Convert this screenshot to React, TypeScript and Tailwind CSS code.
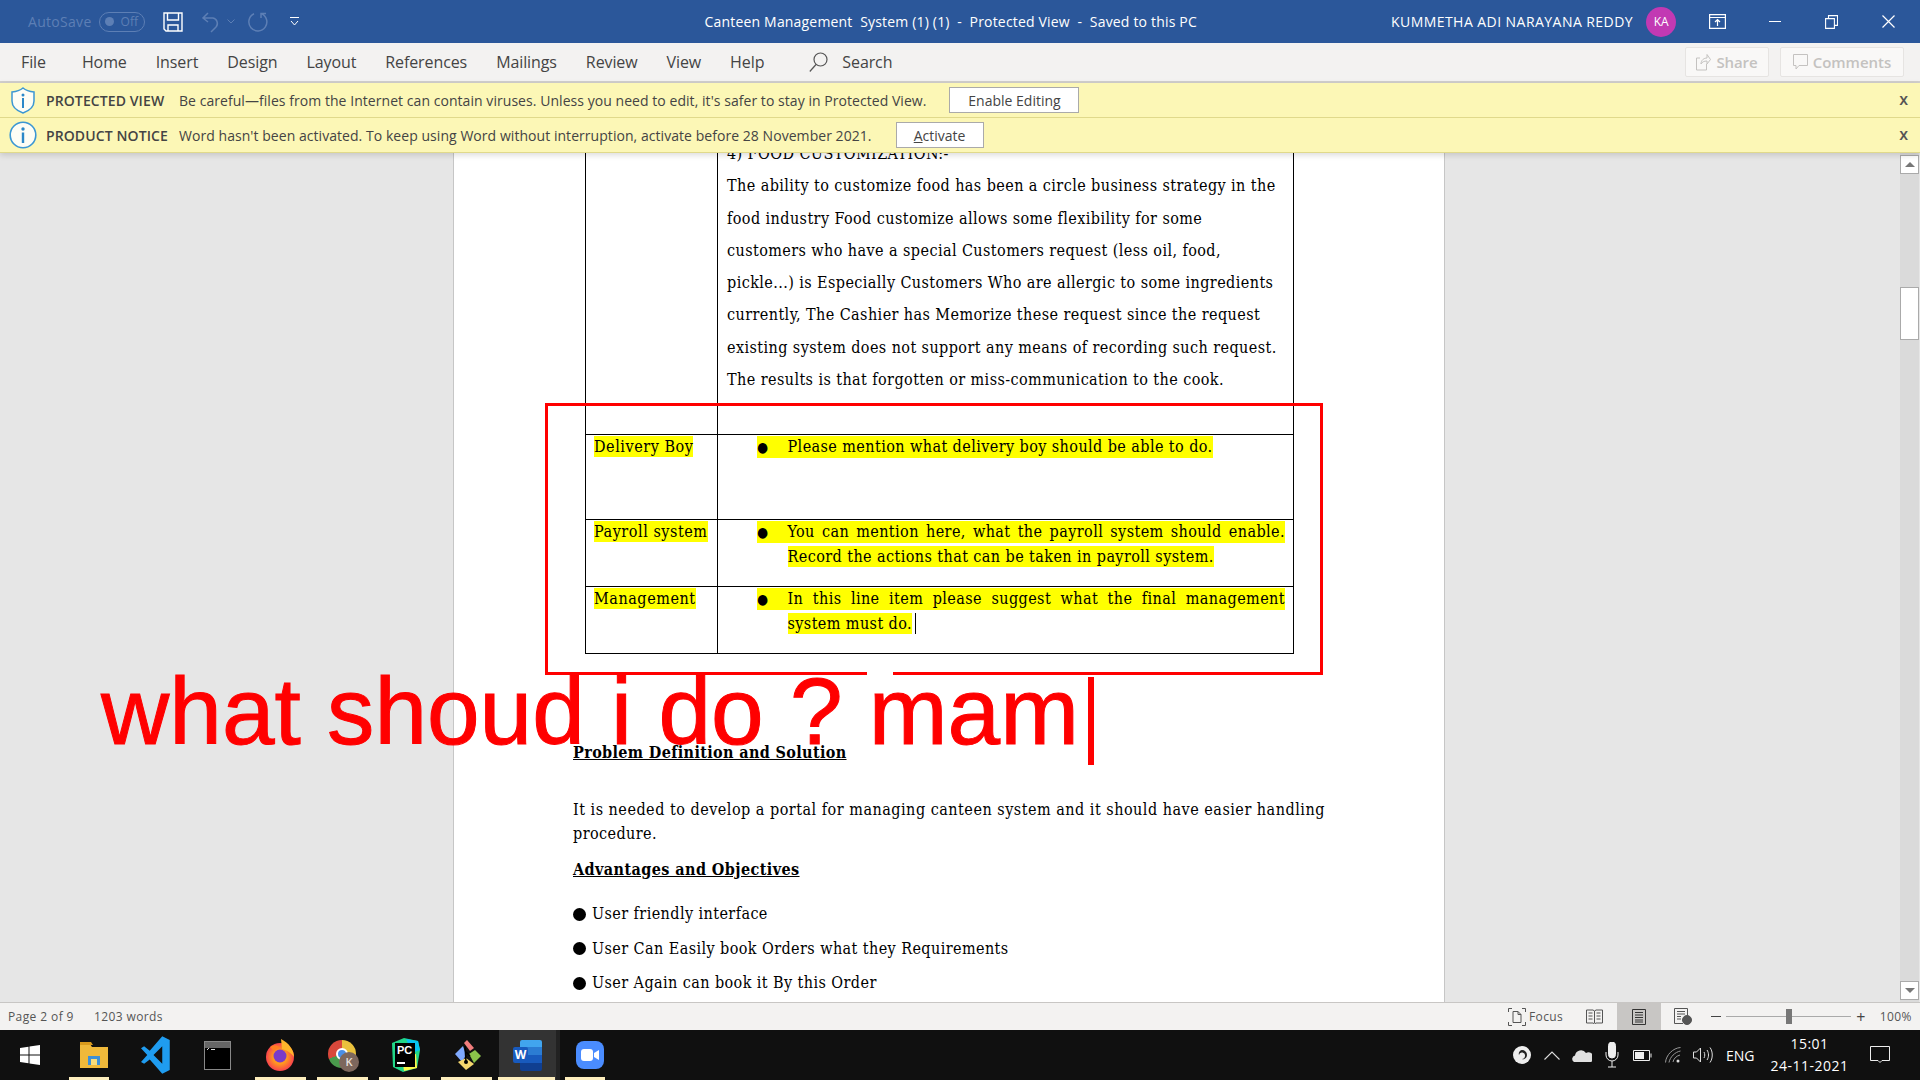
const ui = "[font-family:'Open_Sans',sans-serif]";
const doc = "[font-family:'DejaVu_Serif_Condensed','DejaVu_Serif',serif]";

const tabs = ["Home", "Insert", "Design", "Layout", "References", "Mailings", "Review", "View", "Help"];

function SaveIcon() {
  return (
    <svg width="20" height="20" viewBox="0 0 20 20" fill="none" stroke="white" strokeWidth="1.4" className="ml-[18px]">
      <path d="M1 1h18v18H3l-2-2z" />
      <path d="M4.5 1v7h11V1M5 19v-6h10v6" />
    </svg>
  );
}

function UndoIcon() {
  return (
    <svg width="20" height="22" viewBox="0 0 20 22" fill="none" stroke="#5d7fb5" strokeWidth="1.5" className="ml-[18px]">
      <path d="M7 2 2 7l5 4M2 7h10a5.5 5.5 0 0 1 3 9l-5 5" />
    </svg>
  );
}

function RedoIcon() {
  return (
    <svg width="20" height="22" viewBox="0 0 20 22" fill="none" stroke="#5d7fb5" strokeWidth="1.5" className="ml-[13px]">
      <path d="M13 2.5a9 9 0 1 1-7 .3M13 7V2.5H18" />
    </svg>
  );
}

function Shield() {
  return (
    <svg width="26" height="27" viewBox="0 0 26 27" className="ml-[10px] shrink-0">
      <path d="M13 1c3 2.500 6 3.500 11 4v9c0 6-4 9.500-11 12C6 23.500 2 20 2 14V5c5-.5 8-1.500 11-4z" fill="#fdfdf5" stroke="#3b97d3" strokeWidth="1.5" />
      <circle cx="13" cy="8" r="1.500" fill="#2b88c8" />
      <rect x="12" y="11" width="2" height="10" fill="#2b88c8" />
    </svg>
  );
}

function InfoCircle() {
  return (
    <svg width="28" height="28" viewBox="0 0 28 28" className="ml-[9px] shrink-0">
      <circle cx="14" cy="14" r="12.800" fill="#fdfdf5" stroke="#3b97d3" strokeWidth="1.6" />
      <circle cx="14" cy="8" r="1.700" fill="#2b88c8" />
      <rect x="12.800" y="11.500" width="2.400" height="10.500" fill="#2b88c8" />
    </svg>
  );
}

function Banner({ label, text, button, gap, under }: { label: string; text: string; button: string; gap: string; under?: boolean }) {
  return (
    <div className="relative flex h-[35px] items-center border-b border-[#e0d98b] bg-[#fcf7b6] text-[14px] text-[#444]">
      {label === "PROTECTED VIEW" ? <Shield /> : <InfoCircle />}
      <span className={`w-[133px] font-semibold tracking-[0.1px] ${label === "PROTECTED VIEW" ? "ml-[10px]" : "ml-[9px]"}`}>{label}</span>
      <span className="whitespace-nowrap tracking-[0.05px]">{text}</span>
      <button className={`${gap} flex h-[26px] items-center justify-center border border-[#aaa] bg-white text-[#444] ${under ? "w-[88px]" : "w-[130px]"}`}>
        {under ? <><span className="underline">A</span>ctivate</> : button}
      </button>
      <span className="absolute right-[12px] top-[4px] text-[16px] font-semibold text-[#555]">x</span>
    </div>
  );
}

function TitleBar() {
  return (
    <div className={`flex h-[43px] items-center bg-[#2b579a] ${ui} text-[14px] text-white`}>
      <span className="ml-[28px] tracking-[0.3px] text-[#5d7fb5]">AutoSave</span>
      <div className="ml-[7px] flex h-[20px] w-[46px] items-center rounded-full border border-[#5d7fb5] pl-[5px] text-[12px] text-[#5d7fb5]">
        <span className="h-[9px] w-[9px] rounded-full bg-[#5d7fb5]" />
        <span className="ml-[7px]">Off</span>
      </div>
      <SaveIcon />
      <UndoIcon />
      <svg width="8" height="5" viewBox="0 0 8 5" fill="none" stroke="#5d7fb5" className="ml-[6px]"><path d="M.5.5 4 4 7.500.5" /></svg>
      <RedoIcon />
      <svg width="11" height="10" viewBox="0 0 11 10" fill="none" stroke="white" className="ml-[21px]"><path d="M1 .5h9M2 4l3.500 4L9 4" /></svg>
      <span className="ml-[405px] whitespace-pre text-[14px] tracking-[0.18px]">Canteen Management  System (1) (1)  -  Protected View  -  Saved to this PC</span>
      <span className="ml-[194px] whitespace-nowrap tracking-[0.45px]">KUMMETHA ADI NARAYANA REDDY</span>
      <div className="ml-[13px] flex h-[30px] w-[30px] items-center justify-center rounded-full bg-[#c239b3] text-[12px]">KA</div>
      <svg width="17" height="15" viewBox="0 0 17 15" fill="none" stroke="white" strokeWidth="1.2" className="ml-[33px]">
        <path d="M.6.6h15.800v13.800H.6zM.6 3.500h15.800M8.500 12V6M6 8l2.500-2.500L11 8" />
      </svg>
      <div className="ml-[43px] h-[1.5px] w-[12px] bg-white" />
      <svg width="13" height="14" viewBox="0 0 13 14" fill="none" stroke="white" strokeWidth="1.1" className="ml-[44px]">
        <path d="M.6 3.600h8.800v9.800H.6zM3.500 3.500V.6h9v9.800H9.500" />
      </svg>
      <svg width="13" height="13" viewBox="0 0 13 13" fill="none" stroke="white" strokeWidth="1.2" className="ml-[44px]">
        <path d="m.5.5 12 12M12.500.5l-12 12" />
      </svg>
    </div>
  );
}

function RibbonTabs() {
  return (
    <div className={`flex h-[40px] items-center border-b-2 border-[#d2d0ce] bg-[#f3f2f1] ${ui} text-[16px] tracking-[-0.1px] text-[#444]`}>
      <span className="ml-[21px] mr-[36px]">File</span>
      <div className="flex gap-[29px]">
        {tabs.map((t) => (
          <span key={t}>{t}</span>
        ))}
      </div>
      <svg width="19" height="20" viewBox="0 0 19 20" fill="none" stroke="#555" strokeWidth="1.2" className="ml-[45px]">
        <circle cx="11.500" cy="7.500" r="6.500" />
        <path d="M7 12.500.8 19.500" />
      </svg>
      <span className="ml-[14px]">Search</span>
      <div className="ml-auto flex h-[30px] w-[84px] items-center justify-center gap-[5px] rounded-[2px] border border-[#e6e4e2] bg-[#f9f8f7] text-[15px] font-semibold text-[#c4c2c0]">
        <svg width="15" height="18" viewBox="0 0 15 18" fill="none" stroke="#c4c2c0"><path d="M4 5H.5v12h10v-6M5 11c0-4 3-6 6-6V1.500l3.500 5-3.500 4.500V8c-3 0-5 1-6 3z" /></svg>
        Share
      </div>
      <div className="ml-[11px] mr-[16px] flex h-[30px] w-[124px] items-center justify-center gap-[5px] rounded-[2px] border border-[#e6e4e2] bg-[#f9f8f7] text-[15px] font-semibold tracking-[0px] text-[#c4c2c0]">
        <svg width="15" height="16" viewBox="0 0 15 16" fill="none" stroke="#c4c2c0"><path d="M.5.5h14v11H6l-3 3.500v-3.500H.5z" /></svg>
        Comments
      </div>
    </div>
  );
}

function Highlight({ children }: { children: string }) {
  return <span className="inline-block h-[21px] bg-[#ffff00] tracking-[0.55px] leading-[21px]">{children}</span>;
}

function BulletLine({ children, justify }: { children: string; justify?: boolean }) {
  return (
    <div className={`flex h-[22px] items-center bg-[#ffff00] leading-[22px] ${justify ? "w-[528px]" : "w-fit"}`}>
      <span className="w-[30.500px] shrink-0 text-[14px]">●</span>
      <span className={`whitespace-nowrap ${justify ? "flex-1 whitespace-normal [text-align-last:justify]" : ""}`}>{children}</span>
    </div>
  );
}

function DocTable() {
  const lines = [
    "The ability to customize food has been a circle business strategy in the",
    "food industry Food customize allows some flexibility for some",
    "customers who have a special Customers request (less oil, food,",
    "pickle...) is Especially Customers Who are allergic to some ingredients",
    "currently, The Cashier has Memorize these request since the request",
    "existing system does not support any means of recording such request.",
    "The results is that forgotten or miss-communication to the cook.",
  ];
  return (
    <div className="-mt-[24px] ml-[131px] w-[709px] border-x border-b border-black text-[16px] tracking-[0.42px] text-black">
      <div className="grid h-[306px] grid-cols-[132px_1fr] border-b border-black">
        <div className="border-r border-black" />
        <div className="pl-[9px] pt-[9px] leading-[32.300px]">
          <div>4) FOOD CUSTOMIZATION:-</div>
          {lines.map((l) => (
            <div key={l} className="whitespace-nowrap">{l}</div>
          ))}
        </div>
      </div>
      <div className="grid h-[85px] grid-cols-[132px_1fr] border-b border-black">
        <div className="border-r border-black pl-[8px]"><Highlight>Delivery Boy</Highlight></div>
        <div className="pl-[39px] pt-[1px]"><BulletLine>Please mention what delivery boy should be able to do.</BulletLine></div>
      </div>
      <div className="grid h-[67px] grid-cols-[132px_1fr] border-b border-black">
        <div className="border-r border-black pl-[8px]"><Highlight>Payroll system</Highlight></div>
        <div className="pl-[39px] pt-[1px]">
          <BulletLine justify>You can mention here, what the payroll system should enable.</BulletLine>
          <div className="mt-[3px] pl-[30.500px] leading-[21px]"><span className="inline-block h-[21px] whitespace-nowrap bg-[#ffff00]">Record the actions that can be taken in payroll system.</span></div>
        </div>
      </div>
      <div className="grid h-[66px] grid-cols-[132px_1fr]">
        <div className="border-r border-black pl-[8px]"><Highlight>Management</Highlight></div>
        <div className="pl-[39px] pt-[1px]">
          <BulletLine justify>In this line item please suggest what the final management</BulletLine>
          <div className="mt-[3px] flex pl-[30.500px] leading-[21px]"><span className="inline-block h-[21px] whitespace-nowrap bg-[#ffff00]">system must do. </span><span className="ml-[3px] h-[21px] w-px bg-black" /></div>
        </div>
      </div>
    </div>
  );
}

function DocBody() {
  return (
    <div className="ml-[119px] w-[780px] text-[16px] leading-[24px] tracking-[0.42px] text-black">
      <div className="mt-[87px] font-bold underline tracking-[0.36px]">Problem Definition and Solution</div>
      <div className="mt-[33px] whitespace-nowrap tracking-[0.5px]">It is needed to develop a portal for managing canteen system and it should have easier handling</div>
      <div>procedure.</div>
      <div className="mt-[12px] font-bold underline">Advantages and Objectives</div>
      {["User friendly interface", "User Can Easily book Orders what they Requirements", "User Again can book it By this Order"].map((t, i) => (
        <div key={t} className={`flex items-center ${i === 0 ? "mt-[20px]" : "mt-[10.500px]"}`}>
          <span className="mr-[6px] h-[13px] w-[13px] rounded-full bg-black" />
          {t}
        </div>
      ))}
    </div>
  );
}

function Scrollbar() {
  return (
    <div className="mr-px flex w-[19px] flex-col bg-[#dadada] pt-[2px] pb-[2px]">
      <div className="flex h-[19px] items-center justify-center border border-[#aaa] bg-white">
        <div className="h-0 w-0 border-x-[5px] border-b-[5px] border-x-transparent border-b-[#777]" />
      </div>
      <div className="mt-[113px] h-[53px] border border-[#aaa] bg-white" />
      <div className="mt-auto flex h-[19px] items-center justify-center border border-[#aaa] bg-white">
        <div className="h-0 w-0 border-x-[5px] border-t-[5px] border-x-transparent border-t-[#777]" />
      </div>
    </div>
  );
}

function StatusBar() {
  return (
    <div className={`flex h-[28px] items-center border-t border-[#c8c6c4] bg-[#f3f2f1] ${ui} text-[12px] tracking-[0.4px] text-[#555]`}>
      <span className="ml-[8px]">Page 2 of 9</span>
      <span className="ml-[20px]">1203 words</span>
      <svg width="18" height="18" viewBox="0 0 18 18" fill="none" stroke="#555" className="ml-[1345px]">
        <path d="M.5 4V.5H4M14 .5h3.500V4M17.500 14v3.500H14M4 17.500H.5V14" />
        <path d="M5 3.500h5l3 3v8H5zM10 3.500v3h3" />
      </svg>
      <span className="ml-[3px]">Focus</span>
      <svg width="17" height="15" viewBox="0 0 17 15" fill="none" stroke="#555" className="ml-[23px]">
        <path d="M.5 1h6.500l1.500 1 1.500-1h6.500v13h-6.500l-1.500 1-1.500-1H.5zM8.500 2v12M2.500 4h4M2.500 7h4M2.500 10h4M10.500 4h4M10.500 7h4M10.500 10h4" />
      </svg>
      <div className="ml-[14px] flex h-[27px] w-[44px] items-center justify-center bg-[#c8c6c4]">
        <svg width="14" height="16" viewBox="0 0 14 16" fill="none" stroke="#333"><path d="M.5.5h13v15H.5zM3 3.500h8M3 6h8M3 8.500h8M3 11h8M3 13h8" /></svg>
      </div>
      <svg width="18" height="17" viewBox="0 0 18 17" fill="none" stroke="#555" className="ml-[13px]">
        <path d="M9 15.500H.5V.5h13V8M3 3.500h8M3 6h8M3 8.500h4M3 11h4" />
        <circle cx="13" cy="12" r="4.500" fill="#555" />
      </svg>
      <div className="ml-[19px] h-px w-[10px] bg-[#444]" />
      <div className="relative ml-[5px] h-px w-[125px] bg-[#aaa]">
        <div className="absolute left-[60px] top-[-7px] h-[15px] w-[6px] bg-[#777]" />
      </div>
      <span className="ml-[5px] text-[16px] leading-none text-[#444]">+</span>
      <span className="ml-[14px]">100%</span>
    </div>
  );
}

// cream strips along the bottom of the taskbar, under the open apps
function TaskMarks() {
  const marks = ["left-[69px] w-[40px]", "left-[255px] w-[51px]", "left-[317px] w-[51px]", "left-[379px] w-[51px]", "left-[441px] w-[51px]", "left-[498px] w-[57px]", "left-[565px] w-[40px]"];
  return (
    <>
      {marks.map((m) => (
        <div key={m} className={`absolute bottom-0 h-[3px] bg-[#fdeebd] ${m}`} />
      ))}
    </>
  );
}

function Taskbar() {
  return (
    <div className={`relative flex h-[50px] items-center bg-[#101010] ${ui} text-[14px] text-white`}>
      <svg width="20" height="20" viewBox="0 0 20 20" fill="white" className="ml-[20px]">
        <path d="M0 3l8.500-1.300V9.500H0zM9.500 1.500 20 0v9.500H9.500zM0 10.500h8.500v7.800L0 17zM9.500 10.500H20V20l-10.500-1.500z" />
      </svg>
      <svg width="28" height="26" viewBox="0 0 28 26" className="ml-[40px]">
        <path d="M0 2h10l2 3h16v21H0z" fill="#f0b93a" />
        <path d="M0 0h11l2 3H0z" fill="#d99a1c" />
        <path d="M8 14h12v9H8z" fill="#3d8fd6" />
        <path d="M11 17h6v6h-6z" fill="#f9dc7a" />
      </svg>
      <svg width="30" height="38" viewBox="0 0 24 30" className="ml-[33px]">
        <path fillRule="evenodd" d="M17 0l6 3v24l-6 3L7 18.500 2.500 22 0 20.500 5 15 0 9.500 2.500 8 7 11.500zM17 8l-7 7 7 7z" fill="#1f9cf0" />
      </svg>
      <div className="ml-[33px] flex h-[29px] w-[27px] flex-col border border-[#888] bg-black">
        <div className="h-[6px] bg-[#666]" />
        <svg width="25" height="14" viewBox="0 0 25 14" fill="none" stroke="#ddd"><path d="M2-4 5-1 2 2M6 1.500h4" /></svg>
      </div>
      <svg width="28" height="32" viewBox="0 0 28 32" className="ml-[35px]">
        <defs>
          <radialGradient id="ffx" cx="0.5" cy="0.5" r="0.6">
            <stop offset="0.4" stopColor="#ff9a1f" />
            <stop offset="1" stopColor="#f5215f" />
          </radialGradient>
        </defs>
        <circle cx="14" cy="18" r="14" fill="url(#ffx)" />
        <path d="M15 0c8 4 13 11 13 18-3-4-6-6-12-8z" fill="#ffb52b" />
        <circle cx="14" cy="17" r="6.500" fill="#7a3bc9" />
        <path d="M4 8c4-3 8-2 10 1-3 0-5 1-6 3z" fill="#ff7f22" />
      </svg>
      <div className="relative ml-[34px] h-[30px] w-[30px]">
        <div className="h-[28px] w-[28px] rounded-full [background:conic-gradient(#eac13c_0deg_110deg,#4a9a4c_110deg_250deg,#d9483b_250deg_360deg)]" />
        <div className="absolute left-[8px] top-[8px] h-[12px] w-[12px] rounded-full border-2 border-white bg-[#4a8fe8]" />
        <div className="absolute left-[11px] top-[12px] flex h-[20px] w-[20px] items-center justify-center rounded-full bg-[#7d675d] text-[11px] font-semibold text-[#e8e0dc]">K</div>
      </div>
      <svg width="30" height="34" viewBox="0 0 30 34" className="ml-[32px]">
        <path d="M2 5 14 0l14 3 2 9-3 18-14 4-10-5z" fill="#21d789" />
        <path d="M16 1l12 2 2 9-8 3z" fill="#07c3f2" />
        <path d="M14 33 27 30l-1-14-14 3z" fill="#fcf84a" />
        <rect x="5" y="5" width="20" height="24" fill="black" />
        <text x="7" y="16" fill="white" fontSize="11" fontWeight="700" fontFamily="Liberation Sans">PC</text>
        <rect x="7" y="24" width="8" height="2" fill="white" />
      </svg>
      <svg width="30" height="30" viewBox="0 0 30 30" className="ml-[31px]">
        <path d="M12 6 4 14l7 8 4-7z" fill="#7fa9ff" />
        <path d="m13 3 3-3 7 8-4 3z" fill="#f27d7d" />
        <path d="m18 14 6-4 6 6-7 7z" fill="#8bc34a" />
        <path d="m7 22 8-4 8 6-8 6z" fill="#f5d76e" />
        <path d="M14 6l1 16M15 12l4 4" stroke="black" strokeWidth="1.500" />
        <circle cx="15" cy="22" r="2" fill="black" />
      </svg>
      <div className="ml-[18px] flex h-full w-[57px] items-center justify-center bg-[#333]">
        <div className="relative h-[31px] w-[29px]">
          <div className="absolute right-0 top-0 flex h-[31px] w-[22px] flex-col overflow-hidden rounded-[2px]">
            <div className="h-1/4 bg-[#41a5ee]" />
            <div className="h-1/4 bg-[#2b7cd3]" />
            <div className="h-1/4 bg-[#185abd]" />
            <div className="h-1/4 bg-[#103f91]" />
          </div>
          <div className="absolute left-0 top-[7px] flex h-[16px] w-[15px] items-center justify-center rounded-[2px] bg-[#185abd] text-[12px] font-bold">W</div>
        </div>
      </div>
      <div className="h-full w-[4px] bg-[#222]" />
      <div className="ml-[16px] flex h-[28px] w-[28px] items-center justify-center rounded-[8px] bg-[#4a8cff]">
        <svg width="18" height="12" viewBox="0 0 18 12" fill="white">
          <rect width="12" height="12" rx="3" />
          <path d="m13 4 5-3v10l-5-3z" />
        </svg>
      </div>
      <svg width="18" height="18" viewBox="0 0 18 18" className="ml-[909px]">
        <circle cx="9" cy="9" r="9" fill="#eee" />
        <path d="M9 4a5 5 0 0 1 5 5c0 3-3 5-5 4 2 0 3-2 3-3a3 3 0 0 0-6-1c-1-2 1-5 3-5z" fill="#222" />
      </svg>
      <svg width="16" height="9" viewBox="0 0 16 9" fill="none" stroke="#ddd" strokeWidth="1.1" className="ml-[13px]"><path d="m.5 8.500 7.500-7.500 7.500 7.500" /></svg>
      <svg width="20" height="13" viewBox="0 0 20 13" className="ml-[12px]">
        <path d="M2 13a3.500 3.500 0 0 1 1-6.500A6 6 0 0 1 14 4a4.500 4.500 0 0 1 5 9z" fill="#e0e0e0" />
      </svg>
      <svg width="14" height="26" viewBox="0 0 14 26" className="ml-[13px]" fill="none" stroke="#eee">
        <rect x="3.500" y="0" width="7" height="16" rx="3.500" fill="#eee" />
        <path d="M1 10v3a6 6 0 0 0 12 0v-3M7 19v6M3 25h8" />
      </svg>
      <svg width="19" height="11" viewBox="0 0 19 11" fill="none" stroke="#eee" className="ml-[14px]">
        <path d="M.5.5h16v10H.5zM18 3.500v4" />
        <rect x="2.500" y="2.500" width="8" height="6" fill="#eee" />
      </svg>
      <svg width="16" height="16" viewBox="0 0 16 16" fill="none" stroke="#999" className="ml-[13px]">
        <path d="M.5 15.500C1 8 8 1 15.500.5M4 15.500C5 10 10 5 15.500 4M8 15c.5-3 3-6 7-7" />
        <circle cx="13" cy="14" r="1.500" fill="#ddd" stroke="none" />
      </svg>
      <svg width="20" height="16" viewBox="0 0 20 16" fill="none" stroke="#ddd" className="ml-[12px]">
        <path d="M.5 5h3l4-4v14l-4-4h-3zM11 5c1 2 1 4 0 6M14 3c2 3 2 7 0 10M17 .5c3 4 3 11 0 15" />
      </svg>
      <span className="ml-[13px] w-[30px]">ENG</span>
      <div className="ml-[16px] flex w-[75px] flex-col items-center text-[14px] leading-[22px] tracking-[0.5px]">
        <span>15:01</span>
        <span className="whitespace-nowrap">24-11-2021</span>
      </div>
      <svg width="20" height="18" viewBox="0 0 20 18" fill="none" stroke="#eee" className="ml-[23px]">
        <path d="M.5.5h19v14H12l-2 2-2-2H.5z" />
      </svg>
      <TaskMarks />
    </div>
  );
}

export default function App() {
  return (
    <div className="relative flex h-[1080px] w-[1920px] flex-col overflow-hidden">
      <TitleBar />
      <RibbonTabs />
      <div className={`relative z-10 shadow-[0_2px_6px_rgba(0,0,0,0.15)] ${ui}`}>
        <Banner label="PROTECTED VIEW" text="Be careful—files from the Internet can contain viruses. Unless you need to edit, it's safer to stay in Protected View." button="Enable Editing" gap="ml-[23px]" />
        <Banner label="PRODUCT NOTICE" text="Word hasn't been activated. To keep using Word without interruption, activate before 28 November 2021." button="Activate" gap="ml-[24px]" under />
      </div>
      <div className="flex min-h-0 flex-1 bg-[#e6e6e6]">
        <div className="w-[453px]" />
        <div className={`w-[992px] overflow-hidden border-x border-[#c6c6c6] bg-white ${doc}`}>
          <DocTable />
          <DocBody />
        </div>
        <div className="flex-1" />
        <Scrollbar />
      </div>
      <StatusBar />
      <Taskbar />

      {/* red annotation drawn over the page */}
      <div className="absolute left-[545px] top-[403px] h-[272px] w-[778px] border-[3px] border-[#ff0000]" />
      <div className="absolute left-[867px] top-[671px] h-[5px] w-[26px] bg-white" />
      <div className="absolute left-[101px] top-[656px] whitespace-nowrap text-[94.600px] leading-[110px] text-[#ff0000] [-webkit-text-stroke:1px_#ff0000] [font-family:'Liberation_Sans',sans-serif]">what shoud i do ? mam</div>
      <div className="absolute left-[1088px] top-[677px] h-[88px] w-[6px] bg-[#ff0000]" />
    </div>
  );
}
